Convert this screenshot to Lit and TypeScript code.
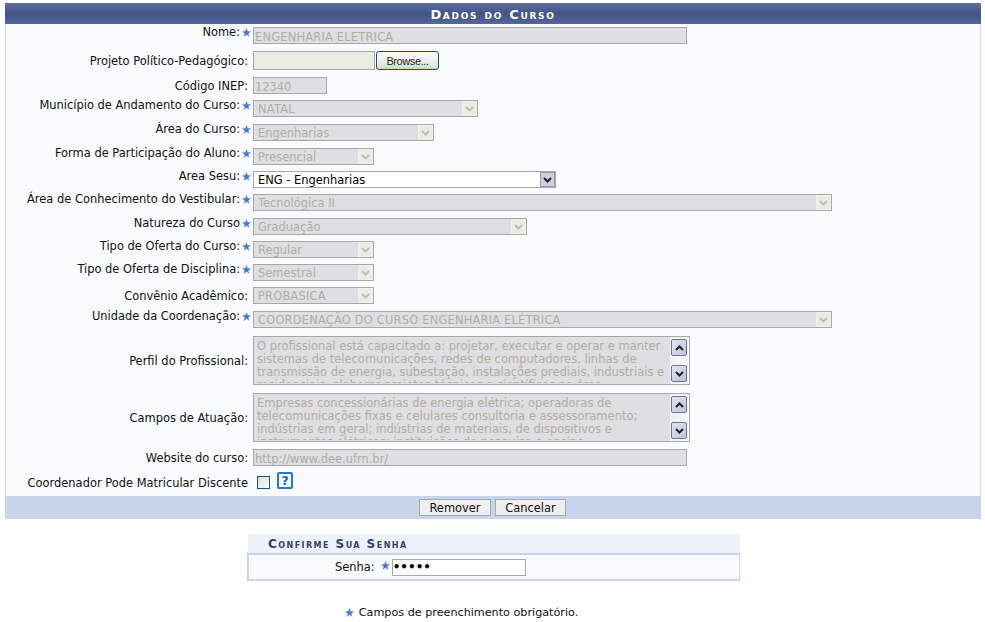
import { LitElement, html, css, svg } from "lit";
import { customElement } from "lit/decorators.js";

type Row = {
  label: string; req?: boolean; gap: number; kind: string; value?: string; w?: number; lines?: string[];
};

const ROWS: Row[] = [
  { label: "Nome:", req: true, gap: 3, kind: "text", value: "ENGENHARIA ELETRICA", w: 434 },
  { label: "Projeto Político-Pedagógico:", gap: 7, kind: "file" },
  { label: "Código INEP:", gap: 7, kind: "text", value: "12340", w: 74 },
  { label: "Município de Andamento do Curso:", req: true, gap: 6, kind: "select", value: "NATAL", w: 225 },
  { label: "Área do Curso:", req: true, gap: 7, kind: "select", value: "Engenharias", w: 181 },
  { label: "Forma de Participação do Aluno:", req: true, gap: 7, kind: "select", value: "Presencial", w: 121 },
  { label: "Area Sesu:", req: true, gap: 6, kind: "active", value: "ENG - Engenharias", w: 303 },
  { label: "Área de Conhecimento do Vestibular:", req: true, gap: 6, kind: "select", value: "Tecnológica II", w: 579 },
  { label: "Natureza do Curso", req: true, gap: 7, kind: "select", value: "Graduação", w: 274 },
  { label: "Tipo de Oferta do Curso:", req: true, gap: 6, kind: "select", value: "Regular", w: 121 },
  { label: "Tipo de Oferta de Disciplina:", req: true, gap: 6, kind: "select", value: "Semestral", w: 121 },
  { label: "Convênio Acadêmico:", gap: 6, kind: "select", value: "PROBASICA", w: 121 },
  { label: "Unidade da Coordenação:", req: true, gap: 7, kind: "select", value: "COORDENAÇÃO DO CURSO ENGENHARIA ELÉTRICA", w: 579 },
  { label: "Perfil do Profissional:", gap: 8, kind: "area", lines: [
    "O profissional está capacitado a: projetar, executar e operar e manter",
    "sistemas de telecomunicações, redes de computadores, linhas de",
    "transmissão de energia, subestação, instalações prediais, industriais e",
    "residenciais, elaborar projetos técnicos e científicos na área",
  ] },
  { label: "Campos de Atuação:", gap: 8, kind: "area", lines: [
    "Empresas concessionárias de energia elétrica; operadoras de",
    "telecomunicações fixas e celulares consultoria e assessoramento;",
    "indústrias em geral; indústrias de materiais, de dispositivos e",
    "instrumentos elétricos; instituições de pesquisa e ensino",
  ] },
  { label: "Website do curso:", gap: 7, kind: "text", value: "http://www.dee.ufrn.br/", w: 434 },
  { label: "Coordenador Pode Matricular Discente", gap: 9, kind: "check" },
];

const star = (size = 9) => html`<svg class="star" width=${size} height=${size} viewBox="0 0 10 10" aria-hidden="true">
  <path d="M5 .3 6.3 3.6 9.8 3.8 7.1 6 8 9.5 5 7.6 2 9.5 2.9 6 .2 3.8 3.7 3.6Z" fill="#4a76cf" stroke="#9db6e6" stroke-width=".5"/>
</svg>`;

const chevron = (up: boolean, color: string) => svg`<svg width="9" height="6" viewBox="0 0 9 6" aria-hidden="true">
  <path d=${up ? "M1 5 4.5 1.5 8 5" : "M1 1 4.5 4.5 8 1"} fill="none" stroke=${color} stroke-width="2"/>
</svg>`;

const isCaps = (v?: string) => !!v && v === v.toUpperCase() && /[A-Z]/.test(v);

@customElement("app-root")
export class AppRoot extends LitElement {
  static styles = css`
    :host { display: block; width: 985px; height: 622px; overflow: hidden; background: #fff;
      font: 11.45px/13px "DejaVu Sans", Verdana, sans-serif; color: #111; }
    * { box-sizing: border-box; }
    .panel { margin: 3px 4px 0 5px; background: #f9fbfd; border-left: 1px solid #d3dae8; border-right: 1px solid #d3dae8; }
    .title { height: 21px; margin: 0 -1px; display: flex; align-items: center; justify-content: center; color: #fff; font-weight: bold;
      font-size: 13px; font-variant: small-caps; letter-spacing: 1.7px; padding-top: 1px;
      border-top: 1px solid #6a7087;
      background: linear-gradient(#5a6b9c, #425387 50%, #56689a); }
    .rows { padding-bottom: 6px; }
    .row { display: flex; }
    .label { flex: none; text-align: right; white-space: nowrap; }
    .row.req .label { width: 234px; line-height: 11px; }
    .row.plain .label { width: 242px; align-self: center; padding-top: 2px; }
    .star { display: block; flex: none; }
    .mark { width: 13px; flex: none; padding: 1px 0 0 2px; }
    .control { display: flex; align-items: center; gap: 1px; }
    .row.plain .control { margin-left: 5px; }
    .caps { letter-spacing: .2px; }
    .field { height: 17px; border: 1px solid #a8a8a8; background: #dfdee2; color: #b2aea2; font: inherit;
      padding: 2px 1px 0; margin: 0; display: block; outline: none; }
    .field.caps { letter-spacing: .2px; }
    .field:disabled { opacity: 1; -webkit-text-fill-color: #b2aea2; }
    .file { width: 122px; height: 19px; background: #ecebe2; border: 1px solid #a8a8a8; }
    .browse { width: 63px; height: 19px; font: 11px "Liberation Sans", Arial, sans-serif; letter-spacing: -.4px; color: #222; padding: 0;
      border: 1px solid #1b4a7c; border-radius: 3px; background: linear-gradient(#fdfdfd, #ece9e0 70%, #d6d2c8); }
    .select { position: relative; height: 17px; padding: 1px 17px 0 4px; border: 1px solid #a8a8a8; background: #dfdee2; color: #b2aea2;
      line-height: 15px; white-space: nowrap; overflow: hidden; }
    .arrow { position: absolute; right: 0; top: 0; width: 15px; height: 15px; display: flex; align-items: center;
      justify-content: center; background: #ecebe4; border: 1px solid #f2f1ec; }
    .select.on { background: #fff; color: #000; }
    .select.on .arrow { background: #cdd0de; border: 1px solid #9598ac; }
    .area { width: 437px; height: 49px; border: 1px solid #a8a8a8; background: #dfdee2; display: flex; overflow: hidden; font-size: 11.5px; }
    .area-text { width: 416px; flex: none; height: 46px; overflow: hidden; padding: 3px 0 0 3px; color: #b2aea2; white-space: nowrap; }
    .scroll { flex: 1; display: flex; flex-direction: column; justify-content: space-between; padding: 2px 2px 2px 1px;
      background: linear-gradient(90deg, #eef0f6, #f8f9fc); }
    .sbtn { width: 16px; height: 17px; display: flex; align-items: center; justify-content: center;
      border: 1px solid #70748c; border-radius: 2px; background: linear-gradient(135deg, #e4e6f0, #bec3d8); }
    .check { display: flex; align-items: center; gap: 7px; margin-left: 4px; }
    .box { appearance: none; width: 13px; height: 13px; margin: 0; border: 1px solid #1c5180; border-radius: 0;
      background: linear-gradient(135deg, #dcdcd6, #fff); display: block; }
    .help { width: 16px; height: 17px; border: 2px solid #1f79cc; border-radius: 2px; background: #fff; color: #1566c0;
      font-weight: bold; font-size: 13px; line-height: 13px; text-align: center; margin: -4px 0 0; }
    .bar { height: 23px; margin: 0 -1px; background: #c8d4ec; display: flex; justify-content: center; align-items: center; gap: 4px; padding-right: 1px; }
    .btn { height: 17px; padding: 1px 0 0; font: inherit; color: #111; background: #efefef; border: 1px solid #a8a8a8; }
    .btn.rm { width: 72px; } .btn.cc { width: 71px; }
    .confirm { width: 493px; margin: 15px 0 0 247px; }
    .confirm h3 { margin: 0 0 0 1px; height: 19px; background: #edf1f8; color: #37406e; font-size: 12px; font-weight: bold;
      font-variant: small-caps; letter-spacing: 1.45px; line-height: 20px; padding-left: 20px; }
    .confirm .line { height: 28px; border: 2px solid #c8d4ec; border-width: 2px 1px 2px 2px; background: #f9fbfd;
      display: flex; align-items: center; padding-left: 86px; }
    .confirm .mark2 { margin: -3px 2px 0 6px; }
    .pass { width: 134px; height: 17px; border: 1px solid #a8a8a8; background: #fff; font: bold 12px "DejaVu Sans", sans-serif; padding: 0; margin: 0; outline: none; }
    .foot { display: flex; justify-content: center; align-items: center; gap: 5px; margin-top: 25px; font-size: 11.2px; padding-right: 62px; }
  `;

  private control(r: Row) {
    switch (r.kind) {
      case "text":
        return html`<input class="field ${isCaps(r.value) && r.value !== "12340" ? "caps" : ""}" style="width:${r.w}px" disabled .value=${r.value ?? ""} />`;
      case "file":
        return html`<div class="file"></div><button class="browse">Browse...</button>`;
      case "select":
      case "active": {
        const on = r.kind === "active";
        return html`<div class="select ${on ? "on" : ""} ${isCaps(r.value) ? "caps" : ""}" style="width:${r.w}px">
          ${r.value}
          <span class="arrow">${chevron(false, on ? "#222" : "#c0bfb6")}</span>
        </div>`;
      }
      case "area":
        return html`<div class="area">
          <div class="area-text">${r.lines!.map((l) => html`<div>${l}</div>`)}</div>
          <div class="scroll">
            <span class="sbtn">${chevron(true, "#222")}</span>
            <span class="sbtn">${chevron(false, "#222")}</span>
          </div>
        </div>`;
      case "check":
        return html`<div class="check"><input class="box" type="checkbox" /><div class="help">?</div></div>`;
    }
    return null;
  }

  render() {
    return html`
      <div class="panel">
        <div class="title">Dados do Curso</div>
        <div class="rows">
          ${ROWS.map((r) => html`
            <div class="row ${r.req ? "req" : "plain"}" style="margin-top:${r.gap}px">
              <div class="label">${r.label}</div>
              ${r.req ? html`<div class="mark">${star()}</div>` : null}
              <div class="control">${this.control(r)}</div>
            </div>`)}
        </div>
        <div class="bar">
          <button class="btn rm">Remover</button>
          <button class="btn cc">Cancelar</button>
        </div>
      </div>
      <div class="confirm">
        <h3>Confirme Sua Senha</h3>
        <div class="line">
          <span>Senha:</span>
          <span class="mark2">${star()}</span>
          <input class="pass" type="password" value="12345" />
        </div>
      </div>
      <div class="foot">${star()}<span>Campos de preenchimento obrigatório.</span></div>
    `;
  }
}
